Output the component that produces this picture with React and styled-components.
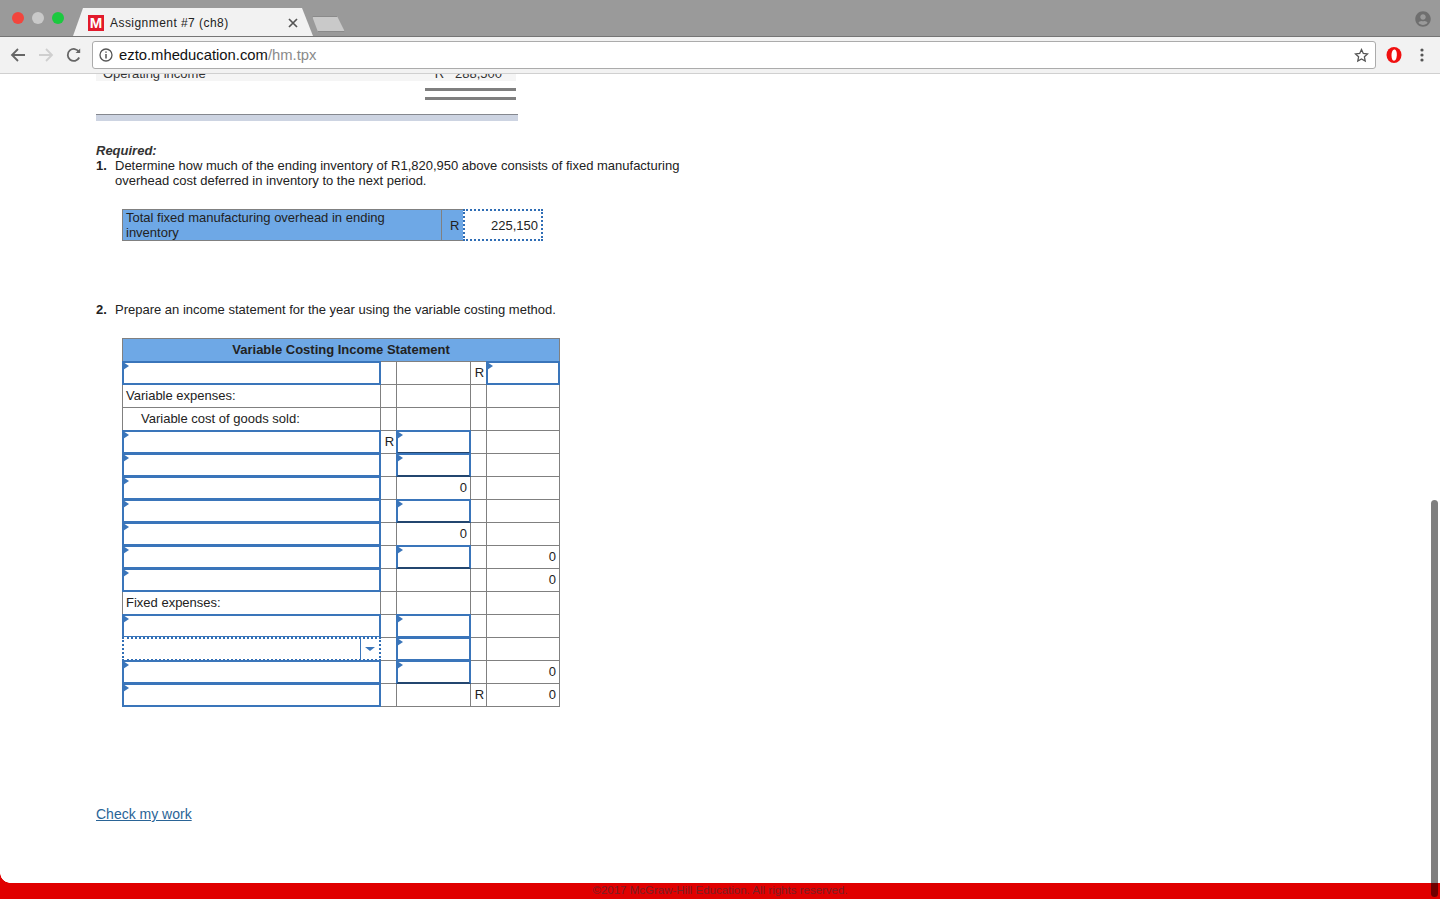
import React from 'react';
import styled, { createGlobalStyle } from 'styled-components';
import { FaUserCircle } from 'react-icons/fa';

const GlobalStyle = createGlobalStyle`
  html, body {
    margin: 0;
    height: 100%;
    overflow: hidden;
    background: #fff;
  }
  #root {
    height: 100%;
  }
`;

const Page = styled.div`
  height: 900px;
  display: flex;
  flex-direction: column;
  font-family: "Liberation Sans", Arial, sans-serif;
  color: #222;
  position: relative;
`;

const TabStrip = styled.div`
  height: 36px;
  background: #9a9a9a;
  border-bottom: 1px solid #757575;
  display: flex;
  align-items: flex-end;
  padding: 0 9px 0 12px;
  flex-shrink: 0;
`;

const Lights = styled.div`
  display: flex;
  gap: 8px;
  align-self: flex-start;
  margin-top: 12px;
  width: 61px;
`;

const Light = styled.span`
  width: 12px;
  height: 12px;
  border-radius: 50%;
  background: ${(p) => p.$color};
`;

const Tab = styled.div`
  width: 240px;
  height: 28px;
  background: #f2f2f2;
  clip-path: polygon(0 100%, 10px 0, 229px 0, 240px 100%);
  display: flex;
  align-items: center;
  padding: 2px 15px 0 15px;
  box-sizing: border-box;
  font-size: 12px;
  color: #222;
  flex-shrink: 0;
`;

const TabLogo = styled.span`
  width: 16px;
  height: 16px;
  background: #e21a2c;
  color: #fff;
  font-weight: 700;
  font-size: 15px;
  line-height: 16px;
  text-align: center;
  margin-right: 6px;
  flex-shrink: 0;
`;

const TabTitle = styled.span`
  flex: 1;
  letter-spacing: 0.45px;
`;

const NewTab = styled.div`
  width: 31px;
  height: 14px;
  margin: 0 0 4px -1px;
  background: #c9c9c9;
  border: 1px solid #8a8a8a;
  clip-path: polygon(0 0, 25px 0, 100% 100%, 6px 100%);
`;

const Spacer = styled.div`
  flex: 1;
`;

const Avatar = styled.span`
  color: #6f6f6f;
  font-size: 16px;
  display: flex;
  align-self: center;
  margin-top: 1px;
`;

const Toolbar = styled.div`
  height: 36px;
  background: #f2f2f2;
  border-bottom: 1px solid #d0d0d0;
  display: flex;
  align-items: center;
  padding: 0 8px;
  flex-shrink: 0;
`;

const NavButton = styled.span`
  width: 20px;
  height: 20px;
  display: flex;
  align-items: center;
  justify-content: center;
  margin-right: ${(p) => p.$gap}px;
`;

const AddressBar = styled.div`
  flex: 1;
  height: 26px;
  margin: 0 8px 0 0;
  background: #fff;
  border: 1px solid #ababab;
  border-radius: 3px;
  display: flex;
  align-items: center;
  padding: 0 6px;
  font-size: 14.8px;
  color: #111;
`;

const UrlPath = styled.span`
  color: #8a8a8a;
`;

const InfoIcon = styled.span`
  display: flex;
  margin-right: 6px;
`;

const Content = styled.main`
  flex: 1;
  min-height: 0;
  overflow: hidden;
  padding-left: 96px;
  font-size: 13px;
  line-height: 15px;
`;

const CutRow = styled.div`
  width: 420px;
  height: 7px;
  overflow: hidden;
  background: #f5f5f5;
  display: flex;
  justify-content: space-between;
  padding: 0 14px 0 7px;
  box-sizing: border-box;
`;

const CutText = styled.span`
  margin-top: -8px;
  line-height: 15px;
  color: #333;
  white-space: pre;
`;

const DoubleRule = styled.div`
  width: 91px;
  height: 6px;
  margin: 7px 0 0 329px;
  border-top: 3px solid #7f7f7f;
  border-bottom: 3px solid #7f7f7f;
`;

const TableFoot = styled.div`
  width: 422px;
  height: 6px;
  margin-top: 14px;
  background: #cdd4e2;
  border-top: 1px solid #85888f;
`;

const Required = styled.div`
  margin-top: 22px;
  font-weight: 700;
  font-style: italic;
  color: #333;
`;

const Question = styled.div`
  display: flex;
  width: 600px;
  margin-top: ${(p) => p.$top || 0}px;
`;

const Num = styled.b`
  width: 19px;
  flex-shrink: 0;
`;

const AnswerBox = styled.div`
  width: 421px;
  height: 32px;
  margin: 21px 0 0 26px;
  box-sizing: border-box;
  display: flex;
  background: #6ea8e6;
  border: 1px solid #808080;
  border-right: none;
  color: #222;
`;

const AnswerLabel = styled.div`
  width: 319px;
  padding: 0 3px;
  box-sizing: border-box;
  border-right: 1px solid #808080;
`;

const AnswerUnit = styled.div`
  width: 21px;
  padding: 8px 0 0 8px;
  box-sizing: border-box;
`;

const AnswerValue = styled.div`
  flex: 1;
  margin: -1px 0;
  background: #fff;
  border: 2px dotted #2f6db5;
  text-align: right;
  padding: 7px 3px 0 0;
  box-sizing: border-box;
`;

const Statement = styled.table`
  margin: 21px 0 0 26px;
  width: 437px;
  table-layout: fixed;
  border-collapse: collapse;
  font-size: 13px;
  line-height: 15px;
  color: #222;
`;

const Col = styled.col`
  width: ${(p) => p.$w}px;
`;

const Head = styled.th`
  height: 23px;
  box-sizing: border-box;
  padding: 0 0 2px;
  background: #6ea8e6;
  border: 1px solid #808080;
  font-size: 13px;
  color: #222;
`;

const Cell = styled.td`
  height: 23px;
  box-sizing: border-box;
  padding: 0 ${(p) => (p.$unit ? 0 : 3)}px 2px ${(p) => p.$indent || 3}px;
  border: 1px solid #808080;
  border-top-color: ${(p) => (p.$rule ? '#000' : '#808080')};
  text-align: ${(p) => p.$align || 'left'};
  overflow: hidden;
  white-space: nowrap;
`;

const InputCell = styled.td`
  height: 23px;
  box-sizing: border-box;
  padding: 0;
  border: 1px solid #808080;
  position: relative;
  background: #fff;
`;

const Field = styled.div`
  position: absolute;
  inset: -1px;
  border: 2px solid #3a75ba;
  border-bottom-color: ${(p) => (p.$dark ? '#23466f' : '#3a75ba')};
  background: #fff;
`;

const Marker = styled.span`
  position: absolute;
  left: -1px;
  top: -1px;
  width: 0;
  height: 0;
  border-left: 6px solid #3a75ba;
  border-top: 4px solid transparent;
  border-bottom: 4px solid transparent;
`;

const DropField = styled.div`
  position: absolute;
  inset: -1px;
  border: 2px dotted #2f6db5;
  background: #fff;
`;

const DropButton = styled.span`
  position: absolute;
  right: 0;
  top: 0;
  bottom: 0;
  width: 18px;
  border-left: 1px solid #3a75ba;
  display: flex;
  align-items: center;
  justify-content: center;

  &::after {
    content: '';
    border-left: 5px solid transparent;
    border-right: 5px solid transparent;
    border-top: 4px solid #3a75ba;
  }
`;

const CheckLink = styled.a`
  display: inline-block;
  margin-top: 100px;
  font-size: 14px;
  color: #2a6496;
  text-decoration: underline;
`;

const Footer = styled.footer`
  height: 16px;
  margin-bottom: 1px;
  background: #e00000;
  flex-shrink: 0;
  position: relative;
  text-align: center;
  font-size: 11.5px;
  line-height: 15px;
  color: #7a1f24;
`;

const Corner = styled.div`
  position: absolute;
  left: 0;
  top: -10px;
  width: 10px;
  height: 10px;
  background: radial-gradient(circle at 100% 0, transparent 9.5px, #e00000 10px);
`;

const Scrollbar = styled.div`
  position: absolute;
  top: 500px;
  right: 2px;
  width: 7px;
  height: 397px;
  border-radius: 4px;
  background: linear-gradient(#7f7f7f 0 383px, #6e0000 383px);
`;

const Input = ({ dark }) => (
  <InputCell>
    <Field $dark={dark}>
      <Marker />
    </Field>
  </InputCell>
);

const rows = [
  ['input', '', '', 'R', 'input'],
  ['Variable expenses:', '', '', '', ''],
  ['@Variable cost of goods sold:', '', '', '', ''],
  ['input', 'R', 'inputDark', '', ''],
  ['input', '', 'inputDark', '', ''],
  ['input', '', '0', '', ''],
  ['input', '', 'inputDark', '', ''],
  ['input', '', '0', '', ''],
  ['input', '', 'inputDark', '', '0'],
  ['input', '', '', '', '^0'],
  ['Fixed expenses:', '', '', '', ''],
  ['input', '', 'input', '', ''],
  ['select', '', 'input', '', ''],
  ['input', '', 'inputDark', '', '0'],
  ['input', '', '', 'R', '^0'],
];

const renderCell = (value, col) => {
  if (value === 'input') return <Input key={col} />;
  if (value === 'inputDark') return <Input key={col} dark />;
  if (value === 'select') {
    return (
      <InputCell key={col}>
        <DropField>
          <DropButton />
        </DropField>
      </InputCell>
    );
  }
  if (value.startsWith('@')) {
    return (
      <Cell key={col} $indent={18}>
        {value.slice(1)}
      </Cell>
    );
  }
  if (value.startsWith('^')) {
    return (
      <Cell key={col} $align="right" $rule>
        {value.slice(1)}
      </Cell>
    );
  }
  if (col === 0) return <Cell key={col}>{value}</Cell>;
  if (value === 'R') {
    return (
      <Cell key={col} $align="center" $indent={2} $unit>
        R
      </Cell>
    );
  }
  return (
    <Cell key={col} $align="right">
      {value}
    </Cell>
  );
};

const App = () => (
  <Page>
    <GlobalStyle />
    <TabStrip>
      <Lights>
        <Light $color="#f2453d" />
        <Light $color="#c9c9c9" />
        <Light $color="#1bc93f" />
      </Lights>
      <Tab>
        <TabLogo>M</TabLogo>
        <TabTitle>Assignment #7 (ch8)</TabTitle>
        <svg width="10" height="10" viewBox="0 0 10 10">
          <path d="M1 1l8 8M9 1l-8 8" stroke="#555" strokeWidth="1.7" />
        </svg>
      </Tab>
      <NewTab />
      <Spacer />
      <Avatar>
        <FaUserCircle />
      </Avatar>
    </TabStrip>
    <Toolbar>
      <NavButton $gap={8}>
        <svg width="16" height="16" viewBox="0 0 16 16" fill="none" stroke="#666" strokeWidth="1.8">
          <path d="M15 8H2M8 2L2 8l6 6" />
        </svg>
      </NavButton>
      <NavButton $gap={8}>
        <svg width="16" height="16" viewBox="0 0 16 16" fill="none" stroke="#cfcfcf" strokeWidth="1.8">
          <path d="M1 8h13M8 2l6 6-6 6" />
        </svg>
      </NavButton>
      <NavButton $gap={8}>
        <svg width="16" height="16" viewBox="0 0 16 16" fill="none" stroke="#666" strokeWidth="1.8">
          <path d="M13.2 10.5A6 6 0 1 1 13 5" />
          <path d="M14.2 1.5v4.6H9.6z" fill="#666" stroke="none" />
        </svg>
      </NavButton>
      <AddressBar>
        <InfoIcon>
          <svg width="14" height="14" viewBox="0 0 14 14" fill="none" stroke="#555" strokeWidth="1.3">
            <circle cx="7" cy="7" r="6" />
            <path d="M7 6v4.4M7 3.4v1.4" strokeWidth="1.5" />
          </svg>
        </InfoIcon>
        ezto.mheducation.com<UrlPath>/hm.tpx</UrlPath>
        <Spacer />
        <svg width="15" height="15" viewBox="0 0 15 15" fill="none" stroke="#555" strokeWidth="1.3">
          <path d="M7.5 1.5l1.8 3.9 4.2.5-3.1 2.9.8 4.2-3.7-2.1-3.7 2.1.8-4.2-3.1-2.9 4.2-.5z" />
        </svg>
      </AddressBar>
      <NavButton $gap={8}>
        <svg width="16" height="18" viewBox="0 0 16 18">
          <ellipse cx="8" cy="9" rx="7.5" ry="8" fill="#f01010" />
          <path d="M5.5 9c0-3 1-5.500 2.800-5.500S11 6 10.800 9.500c-.2 3-1 5.200-2.800 5.200S5.500 12 5.500 9z" fill="#fff" />
        </svg>
      </NavButton>
      <NavButton $gap={0}>
        <svg width="4" height="14" viewBox="0 0 4 14" fill="#555">
          <circle cx="2" cy="2" r="1.6" />
          <circle cx="2" cy="7" r="1.6" />
          <circle cx="2" cy="12" r="1.6" />
        </svg>
      </NavButton>
    </Toolbar>
    <Content>
      <CutRow>
        <CutText>Operating income</CutText>
        <CutText>R   288,500</CutText>
      </CutRow>
      <DoubleRule />
      <TableFoot />
      <Required>Required:</Required>
      <Question>
        <Num>1.</Num>
        <span>
          Determine how much of the ending inventory of R1,820,950 above consists of fixed manufacturing overhead cost
          deferred in inventory to the next period.
        </span>
      </Question>
      <AnswerBox>
        <AnswerLabel>Total fixed manufacturing overhead in ending inventory</AnswerLabel>
        <AnswerUnit>R</AnswerUnit>
        <AnswerValue>225,150</AnswerValue>
      </AnswerBox>
      <Question $top={61}>
        <Num>2.</Num>
        <span>Prepare an income statement for the year using the variable costing method.</span>
      </Question>
      <Statement>
        <colgroup>
          <Col $w={258} />
          <Col $w={16} />
          <Col $w={74} />
          <Col $w={16} />
          <Col $w={73} />
        </colgroup>
        <thead>
          <tr>
            <Head colSpan={5}>Variable Costing Income Statement</Head>
          </tr>
        </thead>
        <tbody>
          {rows.map((row, i) => (
            <tr key={i}>{row.map(renderCell)}</tr>
          ))}
        </tbody>
      </Statement>
      <CheckLink href="#">Check my work</CheckLink>
    </Content>
    <Footer>
      <Corner />
      ©2017 McGraw-Hill Education. All rights reserved.
    </Footer>
    <Scrollbar />
  </Page>
);

export default App;
